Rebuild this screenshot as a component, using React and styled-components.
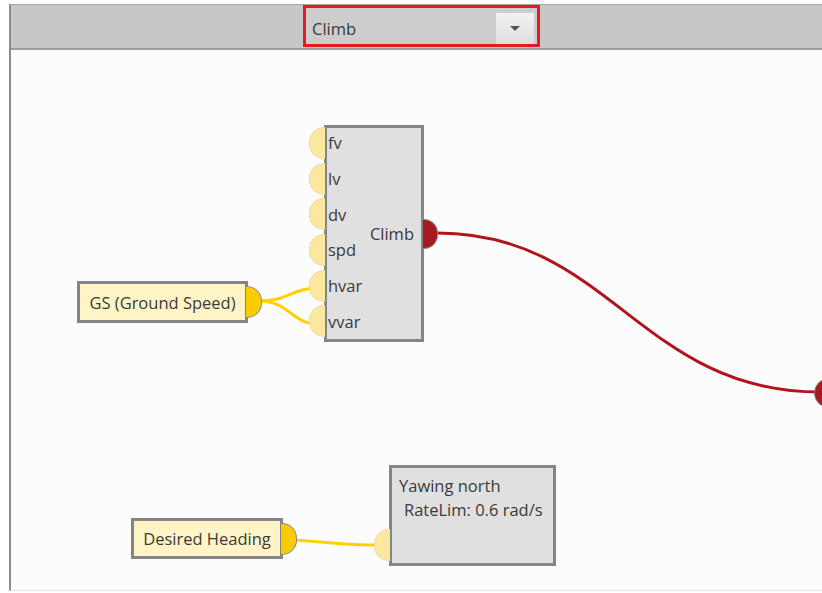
import React from 'react';
import styled, {createGlobalStyle} from 'styled-components';

const GlobalStyle = createGlobalStyle`
  html, body {
    margin: 0;
    padding: 0;
    background: #ffffff;
    overflow: hidden;
  }
  body {
    font-family: "Open Sans", "Noto Sans", sans-serif;
  }
`

// canvas origin in page coordinates
const OX = 11;
const OY = 50;

const Frame = styled.div`
  margin: 4px 0 0 9px;
  height: 587px;
  display: flex;
  flex-direction: column;
  border-left: 2px solid #8c8c8c;
  border-top: 1px solid #a8a8a8;
  border-bottom: 1px solid #e2e2e2;
  box-sizing: border-box;
  overflow: hidden;
`
const Toolbar = styled.div`
  height: 43px;
  flex: none;
  display: flex;
  align-items: flex-start;
  background: #c7c7c7;
  border-bottom: 2px solid #9c9c9c;
  padding-left: 292px;
`
const Select = styled.div`
  width: 237px;
  height: 42px;
  box-sizing: border-box;
  border: 3px solid #e41b23;
  background: #cdcdcd;
  display: flex;
  align-items: center;
  justify-content: space-between;
  padding: 4px 3px 0 6px;
  font-size: 16.5px;
  color: #3a3a3a;
`
const ArrowBtn = styled.div`
  width: 38px;
  height: 31px;
  display: flex;
  align-items: center;
  justify-content: center;
  background: linear-gradient(#f2f2f2, #dedede);
  &::after {
    content: '';
    border-left: 5px solid transparent;
    border-right: 5px solid transparent;
    border-top: 5px solid #555;
  }
`
const Canvas = styled.div`
  position: relative;
  flex: 1;
  background: #fcfcfc;
`
const Wires = styled.svg`
  position: absolute;
  left: 0;
  top: 0;
  width: 100%;
  height: 100%;
  overflow: visible;
`
const Node = styled.div`
  position: absolute;
  left: ${p => p.$x - OX}px;
  top: ${p => p.$y - OY}px;
  width: ${p => p.$w}px;
  height: ${p => p.$h}px;
  box-sizing: border-box;
  border: 3px solid #858585;
  background: ${p => (p.$source ? '#fff4c6' : '#e0e0e0')};
  color: #3a3a3a;
  font-size: 16.5px;
  display: flex;
  align-items: ${p => (p.$top ? 'flex-start' : 'center')};
  justify-content: ${p => (p.$source ? 'center' : 'flex-start')};
`
const PortList = styled.div`
  display: flex;
  flex-direction: column;
  align-self: stretch;
  margin-top: -3px;
`
const PortRow = styled.div`
  position: relative;
  height: 36.2px;
  display: flex;
  align-items: center;
  padding-left: 1px;
`
const InPort = styled.span`
  position: absolute;
  left: -18px;
  top: ${p => (p.$y == null ? '50%' : `${p.$y}px`)};
  transform: translateY(-50%);
  width: 15px;
  height: 30px;
  border-radius: 15px 0 0 15px;
  background: #fbe79e;
  border: 1px solid #efdca0;
  border-right: none;
`
const OutPort = styled.span`
  position: absolute;
  right: -17px;
  top: 50%;
  transform: translateY(-50%);
  width: ${p => p.$r}px;
  height: ${p => p.$r * 2}px;
  border-radius: 0 ${p => p.$r}px ${p => p.$r}px 0;
  background: ${p => p.$color};
  border: 1px solid #8a8a8a;
  border-left: none;
`
const NodeTitle = styled.span`
  margin-left: auto;
  padding-right: 7px;
`
const Lines = styled.div`
  padding: 6px 0 0 7px;
  line-height: 24px;
`
const Indent = styled.div`
  padding-left: 5px;
`
const FarPort = styled.span`
  position: absolute;
  left: ${814 - OX}px;
  top: ${392 - 14 - OY}px;
  width: 28px;
  height: 28px;
  border-radius: 50%;
  background: #a81a20;
  border: 1px solid #7a7a7a;
`

const ports = ['fv', 'lv', 'dv', 'spd', 'hvar', 'vvar'];

export default function App() {
  return (
    <>
      <GlobalStyle />
      <Frame>
        <Toolbar>
          <Select>
            <span>Climb</span>
            <ArrowBtn />
          </Select>
        </Toolbar>
        <Canvas>
          <Wires>
            <g transform={`translate(${-OX} ${-OY})`} fill="none" strokeLinecap="round">
              <path d="M437 233 C 610 233, 640 392, 820 392" stroke="#b2141c" strokeWidth="3" />
              <path d="M260 301 C 288 301, 292 288, 318 288" stroke="#ffd000" strokeWidth="3" />
              <path d="M260 301 C 288 301, 292 324, 318 324" stroke="#ffd000" strokeWidth="3" />
              <path d="M295 540 C 330 542, 350 546, 386 545" stroke="#ffd000" strokeWidth="3" />
            </g>
          </Wires>

          <Node $x={324} $y={125} $w={100} $h={217}>
            <PortList>
              {ports.map(p => (
                <PortRow key={p}>
                  <InPort />
                  {p}
                </PortRow>
              ))}
            </PortList>
            <NodeTitle>Climb</NodeTitle>
            <OutPort $r={14} $color="#a8191f" />
          </Node>

          <Node $x={77} $y={281} $w={171} $h={42} $source>
            GS (Ground Speed)
            <OutPort $r={15} $color="#f9cc00" />
          </Node>

          <Node $x={131} $y={518} $w={152} $h={41} $source>
            Desired Heading
            <OutPort $r={15} $color="#f9cc00" />
          </Node>

          <Node $x={389} $y={465} $w={167} $h={101} $top>
            <InPort $y={77} />
            <Lines>
              <div>Yawing north</div>
              <Indent>RateLim: 0.6 rad/s</Indent>
            </Lines>
          </Node>

          <FarPort />
        </Canvas>
      </Frame>
    </>
  );
}
